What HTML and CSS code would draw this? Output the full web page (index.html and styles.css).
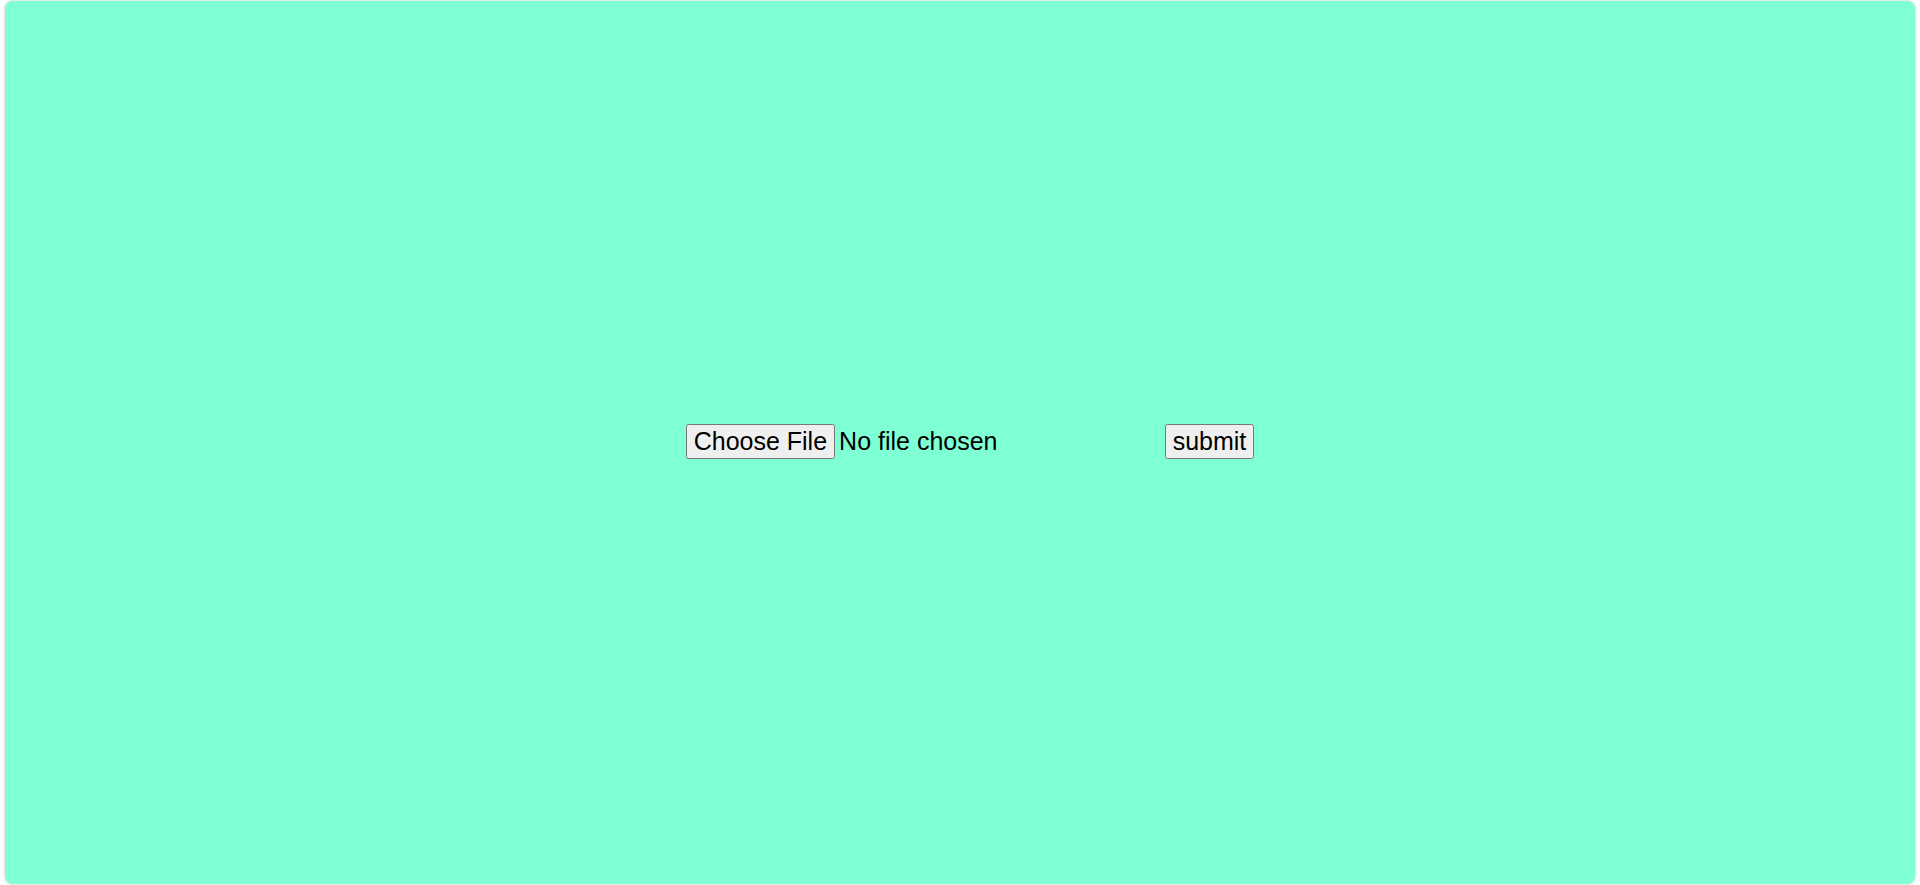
FILE: index.html
```html
<!DOCTYPE html>
<html>
<head>
<meta charset="utf-8">
<link rel="stylesheet" href="styles.css">
</head>
<body>
<div class="panel">
  <form class="upload">
    <input class="file" type="file">
    <button class="submit" type="button">submit</button>
  </form>
</div>
</body>
</html>
```
FILE: styles.css
```css
html, body {
  margin: 0;
  padding: 0;
  background: #ffffff;
  font-family: "Liberation Sans", Arial, sans-serif;
}
.panel {
  margin: 1px 5px;
  height: 883px;
  box-sizing: border-box;
  background: #7fffd4;
  border-radius: 8px;
  box-shadow: 0 0 3px rgba(0, 0, 0, 0.25);
  display: flex;
  align-items: center;
  justify-content: center;
}
.upload {
  display: flex;
  align-items: center;
  margin-left: 20px;
  margin-top: -2px;
}
.file {
  font-family: "Liberation Sans", Arial, sans-serif;
  font-size: 25px;
  width: 473px;
  color: #000;
}
.submit {
  font-family: "Liberation Sans", Arial, sans-serif;
  font-size: 25px;
  margin-left: 6px;
  color: #000;
}
```
